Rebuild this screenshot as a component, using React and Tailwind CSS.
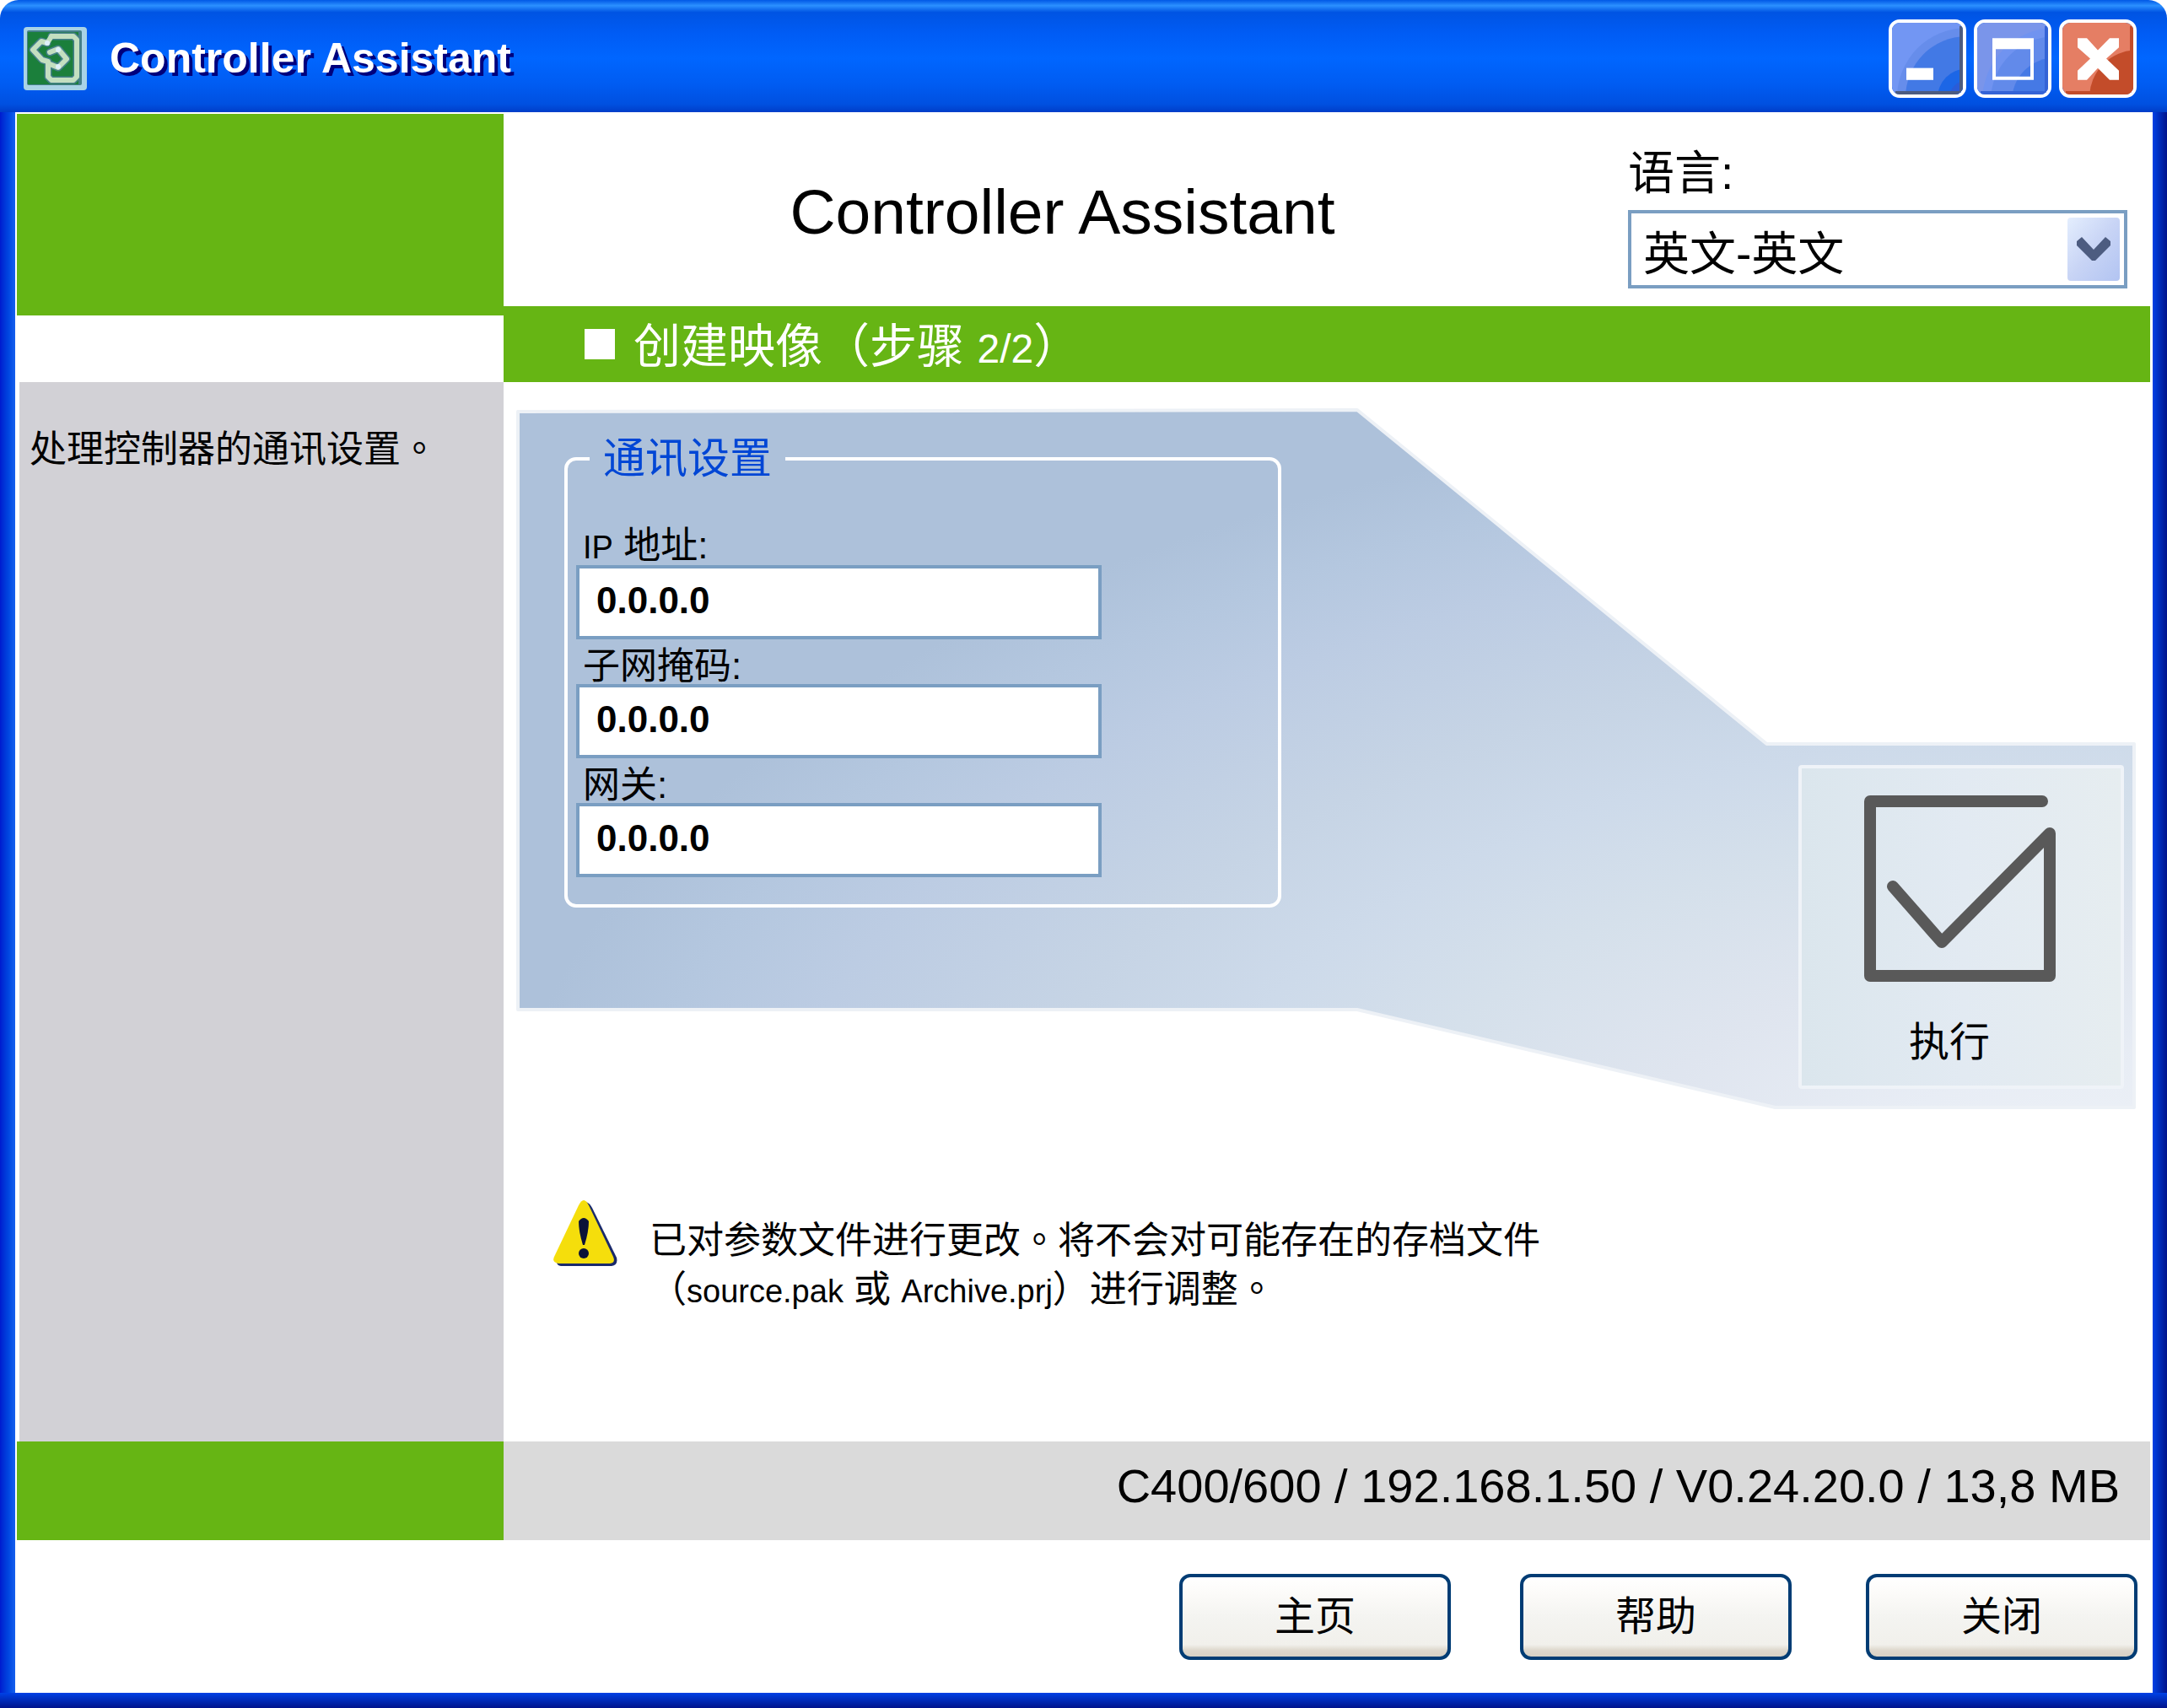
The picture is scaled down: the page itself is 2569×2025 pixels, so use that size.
import { useState } from "react";

const cjk = "font-['Liberation_Sans','Noto_Sans_CJK_SC',sans-serif]";

// Punto y paréntesis centrados en su celda
function Punct({ children }) {
  return <span className="leading-none font-['Noto_Sans_CJK_TC',sans-serif]">{children}</span>;
}

function AppIcon() {
  const frame = "M33 11 H59 L63 15 V59 L59 63 H33 L29 59 V41 L22 39 L11 27 L21 17 L28 19";
  const arrow = "M31 30 L41 26 L51 38 L41 48 L31 44";
  return (
    <svg viewBox="0 0 75 75" className="size-[75px] shrink-0" aria-hidden="true">
      <rect width="75" height="75" rx="4" fill="#a9d3e6" />
      <rect x="4" y="4" width="65" height="65" rx="2" fill="#45808a" />
      <rect x="5" y="6" width="60" height="62" fill="#1b7f3b" />
      <g fill="none" strokeLinejoin="round" strokeLinecap="round">
        <path d={frame} stroke="#45808a" strokeWidth="9" />
        <path d={arrow} stroke="#45808a" strokeWidth="9" />
        <path d={frame} stroke="#c3dfc0" strokeWidth="6" />
        <path d="M28 19 L33 11" stroke="#c3dfc0" strokeWidth="6" />
        <path d={arrow} stroke="#c3dfc0" strokeWidth="6" />
      </g>
      <circle cx="28" cy="19" r="3" fill="#def0fa" />
      <circle cx="41" cy="27" r="3" fill="#def0fa" />
      <circle cx="41" cy="47" r="3" fill="#def0fa" />
    </svg>
  );
}

function WarningIcon() {
  return (
    <svg viewBox="0 0 77 80" className="h-20 w-[77px] shrink-0" aria-hidden="true">
      <path d="M39 3 Q44 4 47 10 L76 69 Q78 78 70 79 H10 Q3 78 6 70 Z" fill="#1a2a6b" />
      <path d="M37 1 Q40 1 43 7 L72 68 Q75 75 68 76 H7 Q-1 75 2 68 L31 7 Q34 1 37 1Z" fill="#f5de0c" />
      <path d="M31 26 Q37 18 43 26 Q43 38 38 54 H36 Q31 38 31 26Z" fill="#0b1238" />
      <circle cx="37" cy="64" r="6" fill="#0b1238" />
    </svg>
  );
}

function TitleBar() {
  const btn = "h-[93px] w-[92px] overflow-hidden rounded-[13px] border-4 border-white";
  return (
    <header className="flex h-[133px] items-center rounded-t-[22px] bg-[linear-gradient(to_bottom,#0058e6_0%,#2b90ff_5%,#0054e3_11%,#005cf5_30%,#0066ff_52%,#005cf2_75%,#0050e0_93%,#003dc8_100%)] pt-[5px] pr-9 pl-7">
      <AppIcon />
      <h1 className="ml-[27px] flex-1 text-[50px] leading-none font-bold text-white [text-shadow:4px_4px_0_#00007c]">
        Controller Assistant
      </h1>
      <div className="flex gap-[9px]">
        <button aria-label="Minimize" className={btn}>
          <svg viewBox="0 0 84 84" preserveAspectRatio="none" className="size-full">
            <rect width="84" height="84" fill="#7296f3" />
            <circle cx="88" cy="88" r="82" fill="#668deb" />
            <circle cx="88" cy="88" r="72" fill="#4279e5" />
            <circle cx="88" cy="88" r="34" fill="#1c66e6" />
            <circle cx="88" cy="88" r="20" fill="#2a5cd8" />
            <path d="M82 4 V82 H4" fill="none" stroke="#4d5c80" strokeWidth="4" />
            <rect x="17" y="53" width="32" height="14" fill="#fff" />
          </svg>
        </button>
        <button aria-label="Maximize" className={btn}>
          <svg viewBox="0 0 84 84" preserveAspectRatio="none" className="size-full">
            <rect width="84" height="84" fill="#7a95ea" />
            <circle cx="92" cy="92" r="86" fill="#7093f0" />
            <circle cx="92" cy="92" r="76" fill="#628aea" />
            <circle cx="92" cy="92" r="51" fill="#4579e5" />
            <path d="M82 4 V82 H4" fill="none" stroke="#3463d6" strokeWidth="4" />
            <path fillRule="evenodd" d="M18 18 H67 V67 H18 Z M22 31 V63 H63 V31 Z" fill="#fff" />
          </svg>
        </button>
        <button aria-label="Close" className={btn}>
          <svg viewBox="0 0 84 84" preserveAspectRatio="none" className="size-full">
            <rect width="84" height="84" fill="#e57e64" />
            <circle cx="88" cy="88" r="56" fill="#c34c2a" />
            <path d="M82 4 V82 H4" fill="none" stroke="#c34c2a" strokeWidth="4" />
            <path
              d="M18 18 H29 L42 32 L56 18 H67 V29 L52 42 L67 56 V67 H56 L42 53 L29 67 H18 V56 L33 42 L18 29 Z"
              fill="#fff"
            />
          </svg>
        </button>
      </div>
    </header>
  );
}

function LanguageSelect() {
  return (
    <div className={`w-[592px] pt-[14px] ${cjk}`}>
      <label htmlFor="language" className="block text-[55px] leading-[72px]">
        语言:
      </label>
      <div className="relative mt-2">
        <select
          id="language"
          className="h-[93px] w-full appearance-none border-4 border-[#7a9ec2] bg-white pt-3 pl-[14px] text-[55px] leading-[72px]"
        >
          <option>英文-英文</option>
        </select>
        <span className="pointer-events-none absolute inset-y-[9px] right-[9px] flex w-[62px] items-center justify-center rounded-sm bg-linear-to-br from-[#e4eefe] via-[#c8d4f5] to-[#b2c4f2]">
          <svg viewBox="0 0 40 28" className="h-7 w-10" aria-hidden="true">
            <path d="M6 0 L20 15 L34 0 L40 5 V10 L22 28 H18 L0 10 V5 Z" fill="#4d5c80" />
          </svg>
        </span>
      </div>
    </div>
  );
}

function AddressField({ id, children }) {
  const [value, setValue] = useState("0.0.0.0");
  return (
    <div>
      <label htmlFor={id} className="block pl-2 text-[44px] leading-[42px]">
        {children}
      </label>
      <input
        id={id}
        value={value}
        onChange={(e) => setValue(e.target.value)}
        className="block h-[88px] w-full border-4 border-[#7a9ec2] bg-white pb-1 pl-5 text-[44px] font-bold"
      />
    </div>
  );
}

function SettingsPanel() {
  return (
    <section className={`relative flex h-[832px] items-start justify-between ${cjk}`}>
      {/* Fondo de la zona de trabajo */}
      <svg
        viewBox="0 0 1922 832"
        preserveAspectRatio="none"
        className="absolute inset-0 size-full"
        aria-hidden="true"
      >
        <defs>
          <radialGradient
            id="panel"
            gradientUnits="userSpaceOnUse"
            cx="0" cy="0" r="1"
            gradientTransform="translate(1888 916) scale(1900 934)"
          >
            <stop offset="0" stopColor="#eef2f7" />
            <stop offset="0.15" stopColor="#e8edf5" />
            <stop offset="0.3" stopColor="#dfe5ef" />
            <stop offset="0.45" stopColor="#d5e0eb" />
            <stop offset="0.57" stopColor="#cddaea" />
            <stop offset="0.68" stopColor="#c6d4e5" />
            <stop offset="0.83" stopColor="#bccce3" />
            <stop offset="0.92" stopColor="#b4c7df" />
            <stop offset="1" stopColor="#adc1da" />
          </radialGradient>
        </defs>
        <path
          d="M2 4 L998 2 L1484 398 H1920 V829 H1494 L998 713 H2 Z"
          fill="url(#panel)" stroke="#edf1f6" strokeWidth="4" strokeLinejoin="round"
        />
      </svg>

      <fieldset className="relative mt-[28px] ml-[57px] h-[564px] w-[850px] rounded-[14px] border-4 border-white pr-[209px] pl-[10px]">
        <legend className="ml-[16px] px-4 text-[50px] leading-[64px] text-[#0046d5]">通讯设置</legend>
        <div className="mt-[50px] flex flex-col gap-[11px]">
          <AddressField id="ip">
            <span className="text-[38px]">IP</span> 地址:
          </AddressField>
          <AddressField id="mask">子网掩码:</AddressField>
          <AddressField id="gateway">网关:</AddressField>
        </div>
      </fieldset>

      <button className="relative mt-[423px] mr-[14px] flex h-[384px] w-[386px] flex-col items-center rounded-sm border-4 border-[#eff3f8] bg-linear-to-r from-[#dbe6ed] via-[#e2eaf2] to-[#e6edf0] pt-8 pr-1">
        <svg viewBox="0 0 227 221" className="h-[221px] w-[227px]" aria-hidden="true">
          <path
            d="M211 7 H7 V214 H220 V45 L92 174 L34 108"
            fill="none" stroke="#595959" strokeWidth="14" strokeLinecap="round" strokeLinejoin="round"
          />
        </svg>
        <span className="mt-9 pr-6 text-[48px] leading-[72px]">执行</span>
      </button>
    </section>
  );
}

function FooterButton({ children }) {
  return (
    <button
      className={`h-[102px] w-[322px] rounded-[13px] border-4 border-[#003c74] bg-[linear-gradient(to_bottom,#fff_0%,#fcfbf9_20%,#f4f4f1_50%,#f1f0eb_85%,#ded8cd_92%,#d8d0c4_100%)] text-[48px] leading-none ${cjk}`}
    >
      {children}
    </button>
  );
}

export default function App() {
  return (
    <div className="flex min-h-screen flex-col bg-white font-['Liberation_Sans',sans-serif] text-black">
      <TitleBar />

      <div className="flex flex-1">
        <div className="w-[18px] bg-linear-to-r from-[#0019cf] to-[#1660ee]" />

        <div className="flex flex-1 flex-col">
          <div className="flex flex-1">
            {/* Columna izquierda */}
            <aside className="flex w-[579px] flex-col">
              <div className="mt-[2px] ml-[2px] h-[239px] bg-[#66b514]" />
              <div className="mt-[79px] ml-[5px] flex-1 bg-[#d2d1d6] pt-12 pl-3">
                <p className={`text-[44px] leading-[64px] ${cjk}`}>
                  处理控制器的通讯设置<Punct>。</Punct>
                </p>
              </div>
            </aside>

            <main className="flex flex-1 flex-col">
              <div className="flex h-[230px] items-center pr-[30px]">
                <h2 className="flex-1 pt-[6px] pr-2 text-center text-[75px] leading-none">Controller Assistant</h2>
                <LanguageSelect />
              </div>

              <div className="mr-[3px] flex h-[90px] items-center gap-[22px] bg-[#66b514] pl-24 text-white">
                <span className="size-9 bg-white" />
                <h3 className={`text-[56px] leading-none ${cjk}`}>
                  创建映像<Punct>（</Punct>步骤 <span className="text-[48px]">2/2</span>
                  <Punct>）</Punct>
                </h3>
              </div>

              <div className="pt-[31px] pr-5 pl-[15px]">
                <SettingsPanel />

                {/* Aviso */}
                <div className="mt-[106px] flex gap-[38px] pl-[43px]">
                  <WarningIcon />
                  <p className={`pt-[20px] text-[44px] leading-[58px] ${cjk}`}>
                    已对参数文件进行更改<Punct>。</Punct>将不会对可能存在的存档文件
                    <br />
                    <Punct>（</Punct>
                    <span className="text-[38px]">source.pak</span> 或 <span className="text-[38px]">Archive.prj</span>
                    <Punct>）</Punct>进行调整<Punct>。</Punct>
                  </p>
                </div>
              </div>
            </main>
          </div>

          <div className="mr-[3px] ml-[2px] flex h-[117px]">
            <div className="w-[577px] bg-[#66b514]" />
            <p className="flex-1 bg-[#dadada] pt-5 pr-9 text-right text-[56px] leading-[66px]">
              C400/600 / 192.168.1.50 / V0.24.20.0 / 13,8 MB
            </p>
          </div>

          <div className="flex h-[181px] justify-end gap-22 pt-10 pr-[18px]">
            <div className="flex gap-[82px]">
              <FooterButton>主页</FooterButton>
              <FooterButton>帮助</FooterButton>
            </div>
            <FooterButton>关闭</FooterButton>
          </div>
        </div>

        <div className="w-[17px] bg-linear-to-r from-[#0041e6] to-[#00138c]" />
      </div>

      <div className="h-[18px] bg-linear-to-b from-[#0041e6] to-[#00138c]" />
    </div>
  );
}
